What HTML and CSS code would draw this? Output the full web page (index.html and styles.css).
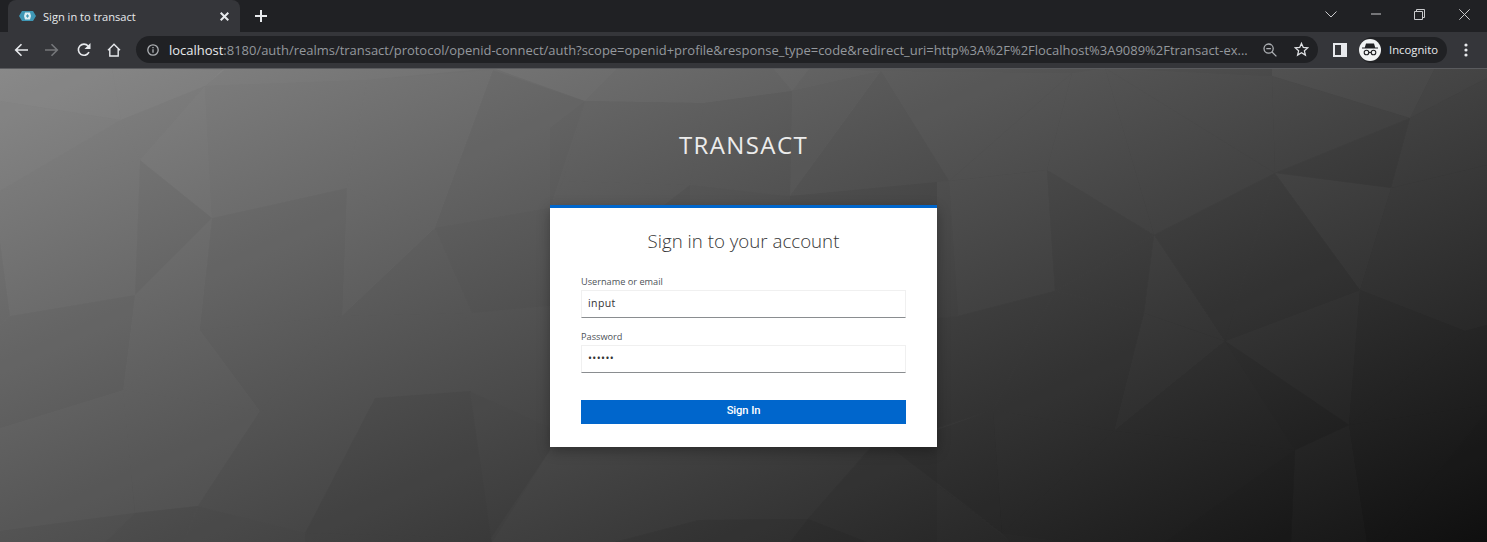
FILE: index.html
```html
<!DOCTYPE html>
<html lang="en">
<head>
<meta charset="utf-8">
<title>Sign in to transact</title>
<link rel="stylesheet" href="styles.css">
</head>
<body>
<div class="browser">
  <div class="titlebar">
    <div class="tab">
      <svg class="favicon" width="17" height="10" viewBox="0 0 17 10"><path class="fav-a" d="M3 0h11l3 5-3 5H3L0 5z"/><path class="fav-b" d="M6 1.500h5l1 3.500-1 3.500H6L5 5z"/><path class="fav-c" d="M8.500 3L7 5l1.500 2L10 5z"/></svg>
      <span class="tab-title">Sign in to transact</span>
      <svg class="tab-close" width="9" height="9" viewBox="0 0 9 9"><path class="st-w2" d="M.7.7l7.600 7.600M8.300.7L.7 8.300"/></svg>
    </div>
    <svg class="newtab" width="12" height="12" viewBox="0 0 12 12"><path class="st-w2" d="M6 0v12M0 6h12"/></svg>
    <div class="win">
      <svg class="win-chevron" width="12" height="7" viewBox="0 0 12 7"><path class="st-g1" d="M.5.5L6 6 11.500.5"/></svg>
      <svg class="win-min" width="10" height="2" viewBox="0 0 10 2"><path class="st-g1" d="M0 1h10"/></svg>
      <svg class="win-max" width="11" height="11" viewBox="0 0 11 11"><path class="st-g1" d="M.5 2.500h8v8h-8zM2.500 2.500v-2h8v8h-2"/></svg>
      <svg class="win-close" width="11" height="11" viewBox="0 0 11 11"><path class="st-g1" d="M.3.3l10.400 10.400M10.700.3L.3 10.700"/></svg>
    </div>
  </div>
  <div class="toolbar">
    <svg class="nav nav-back" width="14" height="14" viewBox="0 0 14 14"><path class="st-w16" d="M14 7H2M7.500 1.200L1.700 7l5.800 5.800"/></svg>
    <svg class="nav nav-fwd" width="14" height="14" viewBox="0 0 14 14"><path class="st-d2" d="M0 7h12M6.500 1.200L12.300 7l-5.800 5.800"/></svg>
    <svg class="nav nav-reload" width="14" height="14" viewBox="0 0 14 14"><path class="st-w16" d="M12 9.200A5.600 5.600 0 1 1 11.200 3"/><path class="fill-w" d="M13.500 0v6h-6z"/></svg>
    <svg class="nav nav-home" width="14" height="14" viewBox="0 0 14 14"><path class="st-w15" d="M1 7.200L7 1.300l6 5.900M2.800 6v7h8.400V6"/></svg>
    <div class="omnibox">
      <svg class="info" width="12" height="12" viewBox="0 0 12 12"><circle class="st-i" cx="6" cy="6" r="5.200"/><path class="st-i" d="M6 5.200v3.600M6 3v1.200"/></svg>
      <div class="url"><span class="host">localhost</span>:8180/auth/realms/transact/protocol/openid-connect/auth?scope=openid+profile&amp;response_type=code&amp;redirect_uri=http%3A%2F%2Flocalhost%3A9089%2Ftransact-ex...</div>
      <svg class="zoomout" width="14" height="14" viewBox="0 0 14 14"><circle class="st-i" cx="5.600" cy="5.600" r="4.600"/><path class="st-i" d="M3.300 5.600h4.600M9 9l4.400 4.400"/></svg>
      <svg class="star" width="15" height="15" viewBox="0 0 15 15"><path class="st-w13" d="M7.500 1.400l1.800 4.100 4.400.4-3.300 2.900 1 4.300-3.900-2.300-3.900 2.300 1-4.300-3.300-2.900 4.400-.4z"/></svg>
    </div>
    <svg class="sidepanel" width="14" height="14" viewBox="0 0 14 14"><path class="fill-w" d="M0 0h14v14H0zM2 2v10h6V2z" fill-rule="evenodd"/></svg>
    <div class="incognito">
      <span class="inc-badge">
        <svg width="16" height="13" viewBox="0 0 16 13"><path class="fill-d" d="M4 .5h8l1.200 4H16v1H0v-1h2.800z"/><circle class="st-d" cx="4.500" cy="9.500" r="2.300"/><circle class="st-d" cx="11.500" cy="9.500" r="2.300"/><path class="st-d" d="M6.800 9.500h2.400"/></svg>
      </span>
      <span class="inc-label">Incognito</span>
    </div>
    <svg class="menu" width="4" height="14" viewBox="0 0 4 14"><circle class="fill-w" cx="2" cy="2" r="1.600"/><circle class="fill-w" cx="2" cy="7" r="1.600"/><circle class="fill-w" cx="2" cy="12" r="1.600"/></svg>
  </div>
  <main class="page">
    <svg class="poly" viewBox="0 1 1487 473" preserveAspectRatio="none" aria-hidden="true">
      <defs><linearGradient id="bg" gradientUnits="userSpaceOnUse" x1="0" y1="0" x2="435" y2="954"><stop offset="0" stop-color="#858585"/><stop offset="1" stop-color="#101010"/></linearGradient></defs>
      <rect width="1487" height="474" fill="url(#bg)"/>
      <polygon class="l3" points="0,0 112,0 121,52 0,33"/>
      <polygon class="l3" points="112,0 224,2 205,18 121,52"/>
      <polygon class="l2" points="0,33 121,52 0,123"/>
      <polygon class="l1" points="121,52 140,92 0,123"/>
      <polygon class="l1" points="121,52 205,18 140,92"/>
      <polygon class="l2" points="205,18 212,150 140,92"/>
      <polygon class="l2" points="224,0 493,0 367,12 205,18"/>
      <polygon class="l1" points="205,18 367,12 347,120 212,150"/>
      <polygon class="l1" points="367,12 493,2 435,160 347,120"/>
      <polygon class="l1" points="0,123 140,92 135,227 10,248 0,173"/>
      <polygon class="d1" points="140,92 212,150 135,227"/>
      <polygon class="l1" points="212,150 200,262 135,227"/>
      <polygon class="d1" points="212,150 347,120 342,248 200,262"/>
      <polygon class="l1" points="347,120 435,160 342,248"/>
      <polygon class="d1" points="435,160 472,245 342,248"/>
      <polygon class="d2" points="435,160 550,140 550,238 472,245"/>
      <polygon class="d1" points="493,2 585,33 550,140 435,160"/>
      <polygon class="l3" points="493,0 618,0 585,33"/>
      <polygon class="l2" points="618,0 773,0 792,23 704,35 585,33"/>
      <polygon class="l3" points="773,0 810,0 792,23"/>
      <polygon class="l2" points="810,0 881,3 792,23"/>
      <polygon class="d1" points="585,33 704,35 690,117 563,113"/>
      <polygon class="d1" points="585,33 563,113 550,140 550,60"/>
      <polygon class="d1" points="704,35 792,23 790,128 690,117"/>
      <polygon class="l1" points="792,23 881,3 790,128"/>
      <polygon class="d1" points="881,3 949,113 790,128"/>
      <polygon class="l1" points="881,3 1072,5 949,113"/>
      <polygon class="d1" points="550,140 563,113 690,117 690,140"/>
      <polygon class="d2" points="690,117 790,128 790,140 660,140"/>
      <polygon class="d3" points="790,128 937,114 937,140 790,140"/>
      <polygon class="d1" points="0,173 10,248 0,257"/>
      <polygon class="d1" points="10,248 135,227 123,322 0,360 0,257"/>
      <polygon class="l1" points="135,227 200,262 123,322"/>
      <polygon class="l1" points="200,262 260,343 123,322"/>
      <polygon class="d1" points="200,262 342,248 260,343"/>
      <polygon class="d1" points="342,248 472,245 375,330 260,343"/>
      <polygon class="d1" points="472,245 550,238 470,323 375,330"/>
      <polygon class="d1" points="550,238 550,360 470,323"/>
      <polygon class="l1" points="0,360 123,322 135,445 0,463"/>
      <polygon class="l1" points="123,322 260,343 198,438 135,445"/>
      <polygon class="d1" points="260,343 375,330 305,465 198,438"/>
      <polygon class="d3" points="375,330 470,323 491,470 305,465"/>
      <polygon class="d2" points="470,323 550,360 550,382 491,470"/>
      <polygon class="d1" points="0,463 135,445 105,474 0,474"/>
      <polygon class="d2" points="135,445 198,438 184,474 105,474"/>
      <polygon class="d2" points="198,438 305,465 305,474 184,474"/>
      <polygon class="d3" points="305,465 491,470 492,474 305,474"/>
      <polygon class="l1" points="550,382 871,379 808,451 699,452 615,474 492,474"/>
      <polygon class="d1" points="699,452 808,451 790,474 615,474"/>
      <polygon class="d3" points="808,451 867,474 790,474"/>
      <polygon class="d1" points="871,379 890,379 999,465 1010,474 867,474 808,451"/>
      <polygon class="d3" points="890,379 993,342 1002,465"/>
      <polygon class="l1" points="1072,5 1047,102 949,113"/>
      <polygon class="l1" points="1072,5 1105,0 1154,167 1047,102"/>
      <polygon class="l1" points="1105,0 1272,8 1275,105"/>
      <polygon class="l1" points="1105,0 1275,105 1154,167"/>
      <polygon class="l3" points="1272,8 1272,0 1435,0 1410,50"/>
      <polygon class="l1" points="1272,8 1410,50 1275,105"/>
      <polygon class="l2" points="1435,0 1487,0 1487,10 1410,50"/>
      <polygon class="l1" points="1410,50 1487,10 1487,97 1391,120"/>
      <polygon class="d1" points="1275,105 1410,50 1391,120"/>
      <polygon class="l2" points="1275,105 1391,120 1360,222"/>
      <polygon class="l1" points="1391,120 1487,97 1487,257 1465,263 1360,222"/>
      <polygon class="d1" points="1154,167 1275,105 1225,273"/>
      <polygon class="d1" points="1275,105 1360,222 1225,273"/>
      <polygon class="d1" points="1047,102 1154,167 1055,223"/>
      <polygon class="l1" points="949,113 1047,102 1055,223 958,248"/>
      <polygon class="d1" points="1055,223 1154,167 1144,245"/>
      <polygon class="l1" points="1154,167 1225,273 1144,245"/>
      <polygon class="d1" points="958,248 1055,223 993,342 937,360 937,250"/>
      <polygon class="d1" points="1055,223 1144,245 1114,363 993,342"/>
      <polygon class="l1" points="1144,245 1225,273 1114,363"/>
      <polygon class="l1" points="1225,273 1360,222 1349,357"/>
      <polygon class="d2" points="1225,273 1349,357 1295,382"/>
      <polygon class="d1" points="1225,273 1295,382 1114,363"/>
      <polygon class="d1" points="1360,222 1465,263 1349,357"/>
      <polygon class="d1" points="1465,263 1487,257 1487,337 1349,357"/>
      <polygon class="l1" points="937,360 993,342 1002,465 937,417"/>
      <polygon class="d1" points="993,342 1114,363 1002,465"/>
      <polygon class="d1" points="1114,363 1295,382 1165,474 1065,474 1002,465"/>
      <polygon class="l1" points="1295,382 1349,357 1367,474 1291,474"/>
      <polygon class="d1" points="1349,357 1487,337 1487,343 1382,474 1367,474"/>
      <polygon class="d2" points="1487,343 1487,474 1382,474"/>
      <polygon class="d2" points="1295,382 1291,474 1165,474"/>
      <polygon class="l1" points="937,417 1002,465 1010,474 937,474"/>
    </svg>
    <h1 class="realm">TRANSACT</h1>
    <section class="card">
      <h2 class="card-title">Sign in to your account</h2>
      <form class="login">
        <label class="field-label" for="username">Username or email</label>
        <input class="field-input" id="username" type="text" value="input">
        <label class="field-label field-next" for="password">Password</label>
        <input class="field-input" id="password" type="password" value="secret">
        <button class="submit" type="button">Sign In</button>
      </form>
    </section>
  </main>
</div>
</body>
</html>
```
FILE: styles.css
```css
* { box-sizing: border-box; }
html, body { margin: 0; height: 100%; overflow: hidden; }
body { font-family: "Open Sans", "Noto Sans", sans-serif; background: #202124; }
.browser { display: flex; flex-direction: column; width: 1487px; height: 542px; }

.titlebar { display: flex; align-items: center; height: 32px; background: #202124; flex: none; }
.tab { display: flex; align-items: center; width: 232px; height: 32px; margin-left: 8px; padding: 0 10px 0 11px; background: #35363a; border-radius: 8px 8px 0 0; }
.favicon { flex: none; margin: 0 7px 0 0; }
.fav-a { fill: #3f97b5; }
.fav-b { fill: #dff0f4; }
.fav-c { fill: #3f97b5; }
.tab-title { flex: 1; font-size: 11.1px; color: #e8eaed; white-space: nowrap; }
.tab-close { flex: none; margin-right: 1px; }
.newtab { flex: none; margin-left: 15px; }
.win { display: flex; align-items: center; margin-left: auto; height: 32px; padding-bottom: 4px; }
.win-chevron { margin-right: 34px; }
.win-min { margin-right: 33px; }
.win-max { margin-right: 34px; }
.win-close { margin-right: 17px; }

.toolbar { display: flex; align-items: center; height: 37px; padding: 0 0 1px 14px; background: #35363a; border-bottom: 1px solid #5a5b5e; flex: none; }
.nav { flex: none; }
.nav-back { margin-right: 17px; }
.nav-fwd { margin-right: 18px; }
.nav-reload { margin-right: 16px; }
.nav-home { margin-right: 15px; }
.omnibox { display: flex; align-items: center; width: 1182px; height: 27px; padding: 0 9px 0 11px; background: #202124; border-radius: 14px; flex: none; }
.info { flex: none; margin-right: 10px; }
.url { flex: 1; font-size: 12.97px; color: #94989d; white-space: nowrap; overflow: hidden; }
.host { color: #e8eaed; }
.zoomout { flex: none; margin-left: 15px; margin-right: 17px; }
.star { flex: none; }
.sidepanel { flex: none; margin-left: 15px; }
.incognito { display: flex; align-items: center; width: 88px; height: 26px; margin-left: 12px; background: #202124; border-radius: 13px; flex: none; }
.inc-badge { display: flex; align-items: center; justify-content: center; width: 22px; height: 22px; background: #f1f3f4; border-radius: 50%; flex: none; }
.inc-label { margin-left: 8px; font-size: 11.3px; color: #e8eaed; }
.menu { flex: none; margin-left: 17px; }

.st-w2 { fill: none; stroke: #e8eaed; stroke-width: 2; }
.st-w16 { fill: none; stroke: #e8eaed; stroke-width: 1.6; }
.st-d2 { fill: none; stroke: #75777a; stroke-width: 1.6; }
.st-w15 { fill: none; stroke: #e8eaed; stroke-width: 1.4; }
.st-w13 { fill: none; stroke: #dfe1e4; stroke-width: 1.3; }
.st-g1 { fill: none; stroke: #c9cacc; stroke-width: 1; }
.st-i { fill: none; stroke: #aeb1b5; stroke-width: 1.3; }
.st-d { fill: none; stroke: #202124; stroke-width: 1.1; }
.fill-w { fill: #e8eaed; }
.fill-d { fill: #202124; }

.page { position: relative; display: flex; flex-direction: column; align-items: center; flex: 1; padding-top: 60px; overflow: hidden; }
.poly { position: absolute; inset: 0; width: 100%; height: 100%; }
.l3 { fill: #fff; fill-opacity: .04; }
.l2 { fill: #fff; fill-opacity: .025; }
.l1 { fill: #fff; fill-opacity: .012; }
.d1 { fill: #000; fill-opacity: .02; }
.d2 { fill: #000; fill-opacity: .04; }
.d3 { fill: #000; fill-opacity: .07; }

.realm { position: relative; margin: 0 0 44px; height: 32px; font-size: 24px; font-weight: 400; line-height: 32px; letter-spacing: 1.4px; color: #ececec; }
.card { position: relative; width: 387px; height: 242px; padding: 19px 31px 0; background: #fff; border-top: 3px solid #0066cc; box-shadow: 0 4px 12px rgba(0, 0, 0, .3); }
.card-title { margin: 0 0 21px; font-size: 18.7px; font-weight: 300; line-height: 27px; text-align: center; color: #363636; }
.login { display: flex; flex-direction: column; }
.field-label { height: 14px; margin-bottom: 1px; font-size: 9.2px; line-height: 14px; color: #4d5258; }
.field-next { margin-top: 12px; }
.field-input { width: 325px; height: 28px; padding: 0 6px 2px; font-family: inherit; font-size: 10.5px; letter-spacing: .4px; color: #333; background: #fff; border: 1px solid #f0f0f0; border-bottom: 1px solid #8a8d90; border-radius: 0; outline: none; }
.submit { width: 325px; height: 24px; margin-top: 27px; padding: 0 0 4px; font-family: "Roboto", "Liberation Sans", sans-serif; font-size: 11.2px; font-weight: 500; letter-spacing: -.1px; color: #fff; background: #0066cc; border: 0; }
```
